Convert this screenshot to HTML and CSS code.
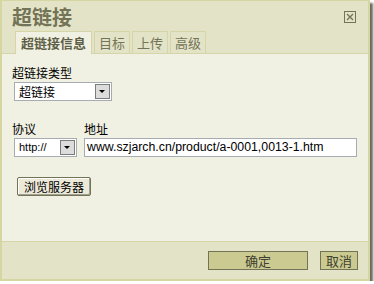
FILE: index.html
```html
<!DOCTYPE html>
<html lang="zh-CN">
<head>
  <meta charset="UTF-8" />
  <title>超链接</title>
  <link rel="stylesheet" href="styles.css">
</head>
<body>

<div class="dialog">
  <div class="dialog-head">
    <div class="title-row">
      <span class="title">超链接</span>
      <span class="close">
        <svg width="8" height="8" viewBox="0 0 8 8"><path d="M1 1L7 7M7 1L1 7" stroke="#737357" stroke-width="1.4"/></svg>
      </span>
    </div>
    <div class="tabs">
      <span class="tab active">超链接信息</span>
      <span class="tab">目标</span>
      <span class="tab">上传</span>
      <span class="tab">高级</span>
    </div>
  </div>

  <div class="dialog-body">
    <label class="field-label">超链接类型</label>
    <div class="select type-select">
      <span class="select-text">超链接</span>
      <span class="arrow"></span>
    </div>

    <div class="url-row">
      <div class="col">
        <label class="field-label">协议</label>
        <div class="select proto-select">
          <span class="select-text latin">http://</span>
          <span class="arrow"></span>
        </div>
      </div>
      <div class="col grow">
        <label class="field-label">地址</label>
        <div class="text-input latin">www.szjarch.cn/product/a-0001,0013-1.htm</div>
      </div>
    </div>

    <button class="btn-browse">浏览服务器</button>
  </div>

  <div class="dialog-foot">
    <button class="btn ok">确定</button>
    <button class="btn cancel">取消</button>
  </div>
</div>

</body>
</html>
```

FILE: styles.css
```css
body {
  margin: 0;
  background: #ffffff;
  font-family: "Noto Sans CJK SC", "Liberation Sans", sans-serif;
  color: #000;
}
.dialog {
  box-sizing: border-box;
  width: 370px;
  height: 281px;
  background: #e3e3c7;
  border: 2px solid #d6d6a2;
  border-top-width: 1px;
  box-shadow: 3px 3px 2px rgba(60, 60, 40, 0.75);
  display: flex;
  flex-direction: column;
}
.dialog-head {
  height: 52px;
  display: flex;
  flex-direction: column;
  border-bottom: 1px solid #d5d5a8;
}
.title-row {
  height: 30px;
  display: flex;
  justify-content: space-between;
  align-items: center;
  padding: 0 12px 0 10px;
}
.title {
  font-size: 20px;
  font-weight: bold;
  color: #737357;
  line-height: 30px;
  padding-top: 2px;
}
.close {
  width: 10px;
  height: 10px;
  border: 1px solid #737357;
  display: flex;
  align-items: center;
  justify-content: center;
  margin-top: 1px;
}
.tabs {
  display: flex;
  gap: 2px;
  padding-left: 13px;
  margin-top: auto;
}
.tab {
  height: 21px;
  line-height: 21px;
  padding: 0 4px;
  font-size: 13px;
  color: #737357;
  border: 1px solid #d5d5a8;
  border-bottom: none;
  background: #e3e3c7;
}
.tab.active {
  background: #f1f1e3;
  font-weight: bold;
  color: #5f5f47;
  padding: 0 5px;
  margin-bottom: -1px;
  height: 22px;
}
.dialog-body {
  flex: 1;
  background: #f1f1e3;
  padding: 10px 10px 0 10px;
  border-bottom: 1px solid #d5d5a8;
}
.field-label {
  display: block;
  font-size: 12px;
  line-height: 16px;
  height: 16px;
  padding-top: 1px;
}
.select {
  box-sizing: border-box;
  height: 19px;
  background: #fff;
  border: 1px solid #a5acb2;
  display: flex;
  align-items: center;
  margin-left: 2px;
  padding: 1px;
}
.type-select {
  width: 98px;
  margin-top: 1px;
}
.proto-select {
  width: 63px;
}
.select-text {
  flex: 1;
  font-size: 12px;
  padding-left: 3px;
  line-height: 15px;
}
.select-text.latin {
  font-family: "Liberation Sans", sans-serif;
  font-size: 11px;
}
.arrow {
  box-sizing: border-box;
  width: 15px;
  height: 15px;
  background: #dcdcdc;
  border: 1px solid #7c7c7c;
  position: relative;
}
.arrow::after {
  content: "";
  position: absolute;
  left: 3px;
  top: 5px;
  border-left: 3px solid transparent;
  border-right: 3px solid transparent;
  border-top: 3px solid #000;
}
.url-row {
  display: flex;
  gap: 7px;
  margin-top: 19px;
}
.col.grow {
  flex: 1;
}
.url-row .field-label {
  height: 17px;
}
.text-input {
  box-sizing: border-box;
  height: 19px;
  width: 273px;
  background: #fff;
  border: 1px solid #a5acb2;
  font-size: 12.3px;
  line-height: 17px;
  padding-left: 2px;
}
.latin {
  font-family: "Liberation Sans", sans-serif;
}
.btn-browse {
  margin-top: 20px;
  margin-left: 5px;
  height: 19px;
  width: 74px;
  padding: 0;
  font-family: "Noto Sans CJK SC", sans-serif;
  font-size: 12px;
  line-height: 15px;
  background: #ece9d8;
  border: 1px solid #737357;
  border-radius: 2px;
  box-shadow: inset -1px -1px 0 #a0a090, inset 1px 1px 0 #fff;
}
.dialog-foot {
  height: 37px;
  display: flex;
  justify-content: flex-end;
  align-items: center;
  gap: 12px;
  padding-right: 10px;
}
.btn {
  height: 19px;
  padding: 0;
  font-family: "Noto Sans CJK SC", sans-serif;
  font-size: 13px;
  line-height: 15px;
  color: #404030;
  background: #cbcb91;
  border: 1px solid #737357;
}
.btn.ok {
  width: 100px;
}
.btn.cancel {
  width: 38px;
}
```
